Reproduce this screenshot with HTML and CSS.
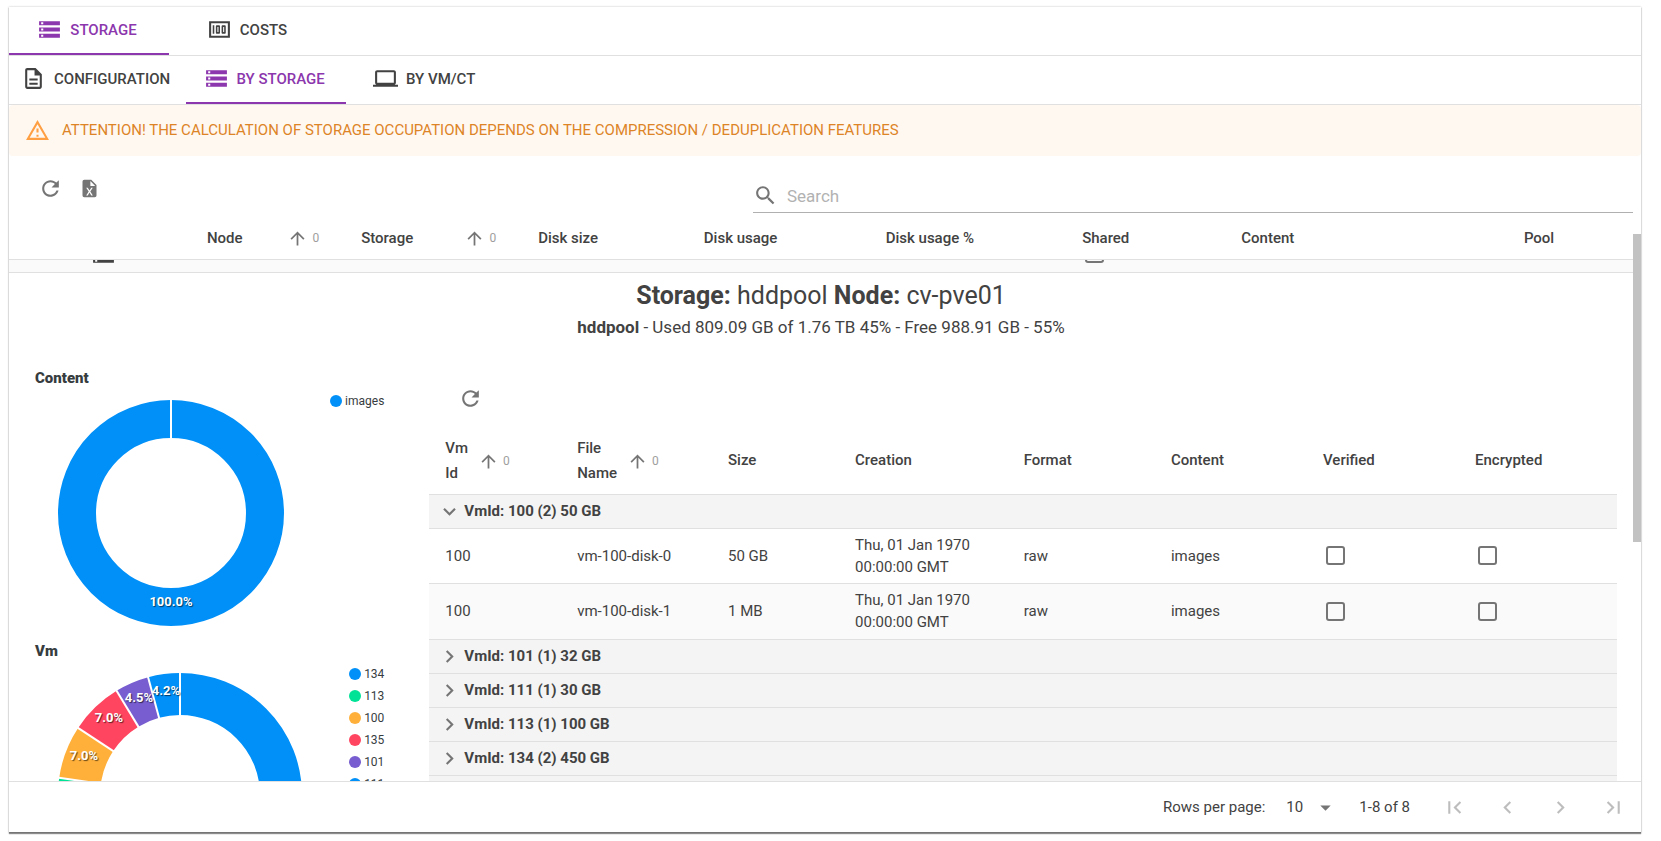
FILE: index.html
```html
<!DOCTYPE html>
<html lang="en">
<head>
<meta charset="utf-8">
<title>Storage</title>
<link rel="stylesheet" href="styles.css">
</head>
<body>
<svg class="defs" aria-hidden="true">
  <symbol id="i-storage" viewBox="0 0 24 24"><path d="M2 20h20v-4H2v4zm2-3h2v2H4v-2zM2 4v4h20V4H2zm4 3H4V5h2v2zm-4 7h20v-4H2v4zm2-3h2v2H4v-2z"/></symbol>
  <symbol id="i-money" viewBox="0 0 24 24"><path d="M15 16h2c.55 0 1-.45 1-1V9c0-.55-.45-1-1-1h-2c-.55 0-1 .45-1 1v6c0 .55.45 1 1 1zm.5-6.500h1v5h-1v-5zM9.500 16h2c.55 0 1-.45 1-1V9c0-.55-.45-1-1-1h-2c-.55 0-1 .45-1 1v6c0 .55.45 1 1 1zm.5-6.500h1v5h-1v-5zM5.500 8H7v8H5.500zM2 4v16h20V4H2zm18 14H4V6h16v12z"/></symbol>
  <symbol id="i-doc" viewBox="0 0 24 24"><path d="M8 16h8v2H8zm0-4h8v2H8zm6-10H6c-1.100 0-2 .9-2 2v16c0 1.100.89 2 1.990 2H18c1.100 0 2-.9 2-2V8l-6-6zm4 18H6V4h7v5h5v11z"/></symbol>
  <symbol id="i-laptop" viewBox="0 0 24 24"><path d="M20 18c1.100 0 1.990-.9 1.990-2L22 6c0-1.100-.9-2-2-2H4c-1.100 0-2 .9-2 2v10c0 1.100.9 2 2 2H0v2h24v-2h-4zM4 6h16v10H4V6z"/></symbol>
  <symbol id="i-warn" viewBox="0 0 24 24"><path d="M12 5.990L19.530 19H4.470L12 5.990M12 2L1 21h22L12 2zm1 14h-2v2h2v-2zm0-6h-2v4h2v-4z"/></symbol>
  <symbol id="i-refresh" viewBox="0 0 24 24"><path d="M17.650 6.350C16.200 4.900 14.210 4 12 4c-4.420 0-7.990 3.580-7.990 8s3.570 8 7.990 8c3.730 0 6.840-2.550 7.730-6h-2.080c-.82 2.330-3.040 4-5.650 4-3.310 0-6-2.690-6-6s2.690-6 6-6c1.660 0 3.140.69 4.220 1.780L13 11h7V4l-2.350 2.350z"/></symbol>
  <symbol id="i-excel" viewBox="0 0 24 24"><path d="M14 2H6a2 2 0 0 0-2 2v16a2 2 0 0 0 2 2h12a2 2 0 0 0 2-2V8l-6-6m1.800 18H14l-2-3.400-2 3.400H8.200l2.900-4.500L8.200 11H10l2 3.400 2-3.400h1.800l-2.900 4.500 2.900 4.500M13 9V3.500L18.500 9H13z"/></symbol>
  <symbol id="i-search" viewBox="0 0 24 24"><path d="M15.500 14h-.79l-.28-.27C15.410 12.590 16 11.110 16 9.500 16 5.910 13.090 3 9.500 3S3 5.910 3 9.500 5.910 16 9.500 16c1.610 0 3.090-.59 4.230-1.570l.27.28v.79l5 4.990L20.490 19l-4.990-5zm-6 0C7.010 14 5 11.990 5 9.500S7.010 5 9.500 5 14 7.010 14 9.500 11.990 14 9.500 14z"/></symbol>
  <symbol id="i-up" viewBox="0 0 24 24"><path d="M4 12l1.410 1.410L11 7.830V20h2V7.830l5.580 5.590L20 12l-8-8-8 8z"/></symbol>
  <symbol id="i-down" viewBox="0 0 24 24"><path d="M7.410 8.590L12 13.170l4.590-4.580L18 10l-6 6-6-6 1.410-1.410z"/></symbol>
  <symbol id="i-right" viewBox="0 0 24 24"><path d="M10 6L8.590 7.410 13.170 12l-4.580 4.590L10 18l6-6z"/></symbol>
  <symbol id="i-left" viewBox="0 0 24 24"><path d="M15.410 7.410L14 6l-6 6 6 6 1.410-1.410L10.830 12z"/></symbol>
  <symbol id="i-first" viewBox="0 0 24 24"><path d="M18.410 16.590L13.820 12l4.590-4.590L17 6l-6 6 6 6zM6 6h2v12H6z"/></symbol>
  <symbol id="i-last" viewBox="0 0 24 24"><path d="M5.590 7.410L10.180 12l-4.590 4.590L7 18l6-6-6-6zM16 6h2v12h-2z"/></symbol>
  <symbol id="i-drop" viewBox="0 0 24 24"><path d="M7 10l5 5 5-5z"/></symbol>
</svg>

<main class="paper">
  <nav class="tabs" role="tablist">
    <button class="tab active" role="tab" aria-selected="true"><svg class="icon"><use href="#i-storage"/></svg>STORAGE</button>
    <button class="tab" role="tab" aria-selected="false"><svg class="icon"><use href="#i-money"/></svg>COSTS</button>
  </nav>
  <nav class="tabs" role="tablist">
    <button class="tab" role="tab" aria-selected="false"><svg class="icon"><use href="#i-doc"/></svg>CONFIGURATION</button>
    <button class="tab active" role="tab" aria-selected="true"><svg class="icon"><use href="#i-storage"/></svg>BY STORAGE</button>
    <button class="tab" role="tab" aria-selected="false"><svg class="icon"><use href="#i-laptop"/></svg>BY VM/CT</button>
  </nav>

  <div class="alert" role="alert"><svg class="icon"><use href="#i-warn"/></svg>ATTENTION! THE CALCULATION OF STORAGE OCCUPATION DEPENDS ON THE COMPRESSION / DEDUPLICATION FEATURES</div>

  <div class="toolbar">
    <div class="tools">
      <button class="icon-button" aria-label="Refresh"><svg class="icon"><use href="#i-refresh"/></svg></button>
      <button class="icon-button" aria-label="Export to Excel"><svg class="icon small"><use href="#i-excel"/></svg></button>
    </div>
    <label class="search"><svg class="icon"><use href="#i-search"/></svg><input type="text" placeholder="Search" aria-label="Search"></label>
  </div>

  <section class="scroller">
    <table class="grid storages">
      <colgroup><col class="s-icon"><col class="s-node"><col class="s-storage"><col class="s-size"><col class="s-usage"><col class="s-percent"><col class="s-shared"><col class="s-content"><col class="s-pool"></colgroup>
      <thead>
        <tr>
          <th></th>
          <th><span class="sortable">Node <button class="sort" aria-label="Sort by node"><svg class="icon arrow"><use href="#i-up"/></svg>0</button></span></th>
          <th><span class="sortable">Storage <button class="sort" aria-label="Sort by storage"><svg class="icon arrow"><use href="#i-up"/></svg>0</button></span></th>
          <th>Disk size</th>
          <th>Disk usage</th>
          <th>Disk usage %</th>
          <th>Shared</th>
          <th>Content</th>
          <th>Pool</th>
        </tr>
      </thead>
      <tbody>
        <tr class="passed">
          <td><div class="sliver device"><svg class="icon"><use href="#i-storage"/></svg></div></td>
          <td></td><td></td><td></td><td></td><td></td>
          <td><div class="sliver"><input type="checkbox" aria-label="Shared"></div></td>
          <td></td><td></td>
        </tr>
        <tr>
          <td class="detail" colspan="9">
            <h1><b>Storage:</b> hddpool <b>Node:</b> cv-pve01</h1>
            <p class="summary"><b>hddpool</b> - Used 809.09 GB of 1.76 TB 45% - Free 988.91 GB - 55%</p>
            <div class="columns">
              <div class="charts">
                <figure class="chart">
                  <figcaption>Content</figcaption>
                  <div class="plot">
                    <svg class="donut content" viewBox="-114 -114 228 228">
                      <circle r="94" stroke="#0090f8" stroke-width="38"/>
                      <line y1="-114" y2="-74"/>
                      <text y="93">100.0%</text>
                    </svg>
                    <ul class="legend">
                      <li><i class="dot blue"></i>images</li>
                    </ul>
                  </div>
                </figure>
                <figure class="chart">
                  <figcaption>Vm</figcaption>
                  <div class="plot">
                    <svg class="donut vm" viewBox="-123 -123 246 246">
                      <g stroke-width="42" transform="rotate(-90)">
                        <circle r="101" pathLength="712" stroke="#0090f8" stroke-dasharray="450 262"/>
                        <circle r="101" pathLength="712" stroke="#00e396" stroke-dasharray="100 612" stroke-dashoffset="-450"/>
                        <circle r="101" pathLength="712" stroke="#feb03b" stroke-dasharray="50 662" stroke-dashoffset="-550"/>
                        <circle r="101" pathLength="712" stroke="#ff4560" stroke-dasharray="50 662" stroke-dashoffset="-600"/>
                        <circle r="101" pathLength="712" stroke="#775dd0" stroke-dasharray="32 680" stroke-dashoffset="-650"/>
                        <circle r="101" pathLength="712" stroke="#0090f8" stroke-dasharray="30 682" stroke-dashoffset="-682"/>
                      </g>
                      <line y1="-124" y2="-78"/>
                      <line y1="-124" y2="-78" transform="rotate(-15.170)"/>
                      <line y1="-124" y2="-78" transform="rotate(-31.350)"/>
                      <line y1="-124" y2="-78" transform="rotate(-56.630)"/>
                      <line y1="-124" y2="-78" transform="rotate(-81.910)"/>
                      <line y1="-124" y2="-78" transform="rotate(-132.470)"/>
                      <text x="-14" y="-100">4.2%</text>
                      <text x="-41" y="-93">4.5%</text>
                      <text x="-71" y="-73">7.0%</text>
                      <text x="-96" y="-35">7.0%</text>
                    </svg>
                    <ul class="legend">
                      <li><i class="dot blue"></i>134</li>
                      <li><i class="dot green"></i>113</li>
                      <li><i class="dot orange"></i>100</li>
                      <li><i class="dot red"></i>135</li>
                      <li><i class="dot violet"></i>101</li>
                      <li><i class="dot blue"></i>111</li>
                    </ul>
                  </div>
                </figure>
              </div>

              <div class="disks">
                <button class="icon-button" aria-label="Refresh disks"><svg class="icon"><use href="#i-refresh"/></svg></button>
                <table class="grid files">
                  <colgroup><col class="f-vm"><col class="f-name"><col class="f-size"><col class="f-creation"><col class="f-format"><col class="f-content"><col class="f-verified"><col class="f-encrypted"></colgroup>
                  <thead>
                    <tr>
                      <th><span class="sortable tight"><span>Vm<br>Id</span><button class="sort" aria-label="Sort by VM id"><svg class="icon arrow"><use href="#i-up"/></svg>0</button></span></th>
                      <th><span class="sortable tight"><span>File<br>Name</span><button class="sort" aria-label="Sort by file name"><svg class="icon arrow"><use href="#i-up"/></svg>0</button></span></th>
                      <th>Size</th>
                      <th>Creation</th>
                      <th>Format</th>
                      <th>Content</th>
                      <th>Verified</th>
                      <th>Encrypted</th>
                    </tr>
                  </thead>
                  <tbody>
                    <tr class="group"><td colspan="8"><button aria-expanded="true"><svg class="icon chevron"><use href="#i-down"/></svg>VmId: 100 (2) 50 GB</button></td></tr>
                    <tr class="file">
                      <td>100</td><td>vm-100-disk-0</td><td>50 GB</td><td>Thu, 01 Jan 1970 00:00:00 GMT</td><td>raw</td><td>images</td>
                      <td><input type="checkbox" aria-label="Verified"></td><td><input type="checkbox" aria-label="Encrypted"></td>
                    </tr>
                    <tr class="file striped">
                      <td>100</td><td>vm-100-disk-1</td><td>1 MB</td><td>Thu, 01 Jan 1970 00:00:00 GMT</td><td>raw</td><td>images</td>
                      <td><input type="checkbox" aria-label="Verified"></td><td><input type="checkbox" aria-label="Encrypted"></td>
                    </tr>
                    <tr class="group"><td colspan="8"><button aria-expanded="false"><svg class="icon chevron"><use href="#i-right"/></svg>VmId: 101 (1) 32 GB</button></td></tr>
                    <tr class="group"><td colspan="8"><button aria-expanded="false"><svg class="icon chevron"><use href="#i-right"/></svg>VmId: 111 (1) 30 GB</button></td></tr>
                    <tr class="group"><td colspan="8"><button aria-expanded="false"><svg class="icon chevron"><use href="#i-right"/></svg>VmId: 113 (1) 100 GB</button></td></tr>
                    <tr class="group"><td colspan="8"><button aria-expanded="false"><svg class="icon chevron"><use href="#i-right"/></svg>VmId: 134 (2) 450 GB</button></td></tr>
                    <tr class="group last"><td colspan="8"></td></tr>
                  </tbody>
                </table>
              </div>
            </div>
          </td>
        </tr>
      </tbody>
    </table>
    <div class="thumb"></div>
  </section>

  <footer class="pager">
    <label for="rows">Rows per page:</label>
    <span class="select"><select id="rows"><option>10</option><option>25</option><option>50</option></select><svg class="icon"><use href="#i-drop"/></svg></span>
    <span class="range">1-8 of 8</span>
    <div class="pages">
      <button class="page" aria-label="First page" disabled><svg class="icon"><use href="#i-first"/></svg></button>
      <button class="page" aria-label="Previous page" disabled><svg class="icon"><use href="#i-left"/></svg></button>
      <button class="page" aria-label="Next page" disabled><svg class="icon"><use href="#i-right"/></svg></button>
      <button class="page" aria-label="Last page" disabled><svg class="icon"><use href="#i-last"/></svg></button>
    </div>
  </footer>
</main>
</body>
</html>
```
FILE: styles.css
```css
:root {
  --primary: #8c37ad;
  --text: #424242;
  --muted: #757575;
  --line: #e0e0e0;
}

* { box-sizing: border-box; }

html, body { height: 100%; }

body {
  margin: 0;
  padding: 7px 20px 8px 9px;
  background: #fff;
  color: var(--text);
  font: 15px/22px Roboto, sans-serif;
  overflow: hidden;
}

button, input, select {
  margin: 0;
  padding: 0;
  border: 0;
  background: none;
  color: inherit;
  font: inherit;
}

.defs { position: absolute; width: 0; height: 0; }

.icon { width: 25px; height: 25px; flex: none; fill: currentColor; display: block; }
.icon.small { width: 21px; height: 21px; }
.icon.arrow { width: 21px; height: 21px; color: var(--muted); }
.icon.chevron { color: var(--muted); }

.paper {
  height: 100%;
  display: flex;
  flex-direction: column;
  background: #fff;
  box-shadow: 0 0 2px rgba(0, 0, 0, .25), 0 1px 1px rgba(0, 0, 0, .4);
}

.tabs { display: flex; flex: none; height: 49px; border-bottom: 1px solid var(--line); }
.tab {
  min-width: 160px;
  padding: 0 16px 1px 12px;
  display: flex;
  align-items: center;
  justify-content: center;
  gap: 8px;
  border-bottom: 2px solid transparent;
  font-weight: 500;
}
.tab.active { color: var(--primary); border-color: var(--primary); }

.alert {
  flex: none;
  height: 51px;
  padding: 0 16px 1px;
  display: flex;
  align-items: center;
  gap: 12px;
  background: #fff8f1;
  color: #dd8427;
  border-radius: 4px;
}
.alert .icon { color: #ff9f43; }

.toolbar {
  flex: none;
  height: 57px;
  padding: 0 8px 0 24px;
  display: flex;
  align-items: flex-end;
  justify-content: space-between;
}
.tools { display: flex; align-self: center; gap: 4px; padding-top: 7px; }
.icon-button { width: 35px; height: 35px; display: grid; place-items: center; color: var(--muted); }
.search {
  width: 55%;
  height: 36px;
  padding-top: 2px;
  display: flex;
  align-items: center;
  gap: 9px;
  border-bottom: 1px solid #b0b0b0;
}
.search .icon { color: var(--muted); }
.search input { flex: 1; outline: 0; font-size: 17px; }
.search input::placeholder { color: #b2b2b2; opacity: 1; }

.scroller { flex: 1; min-height: 0; overflow: hidden; position: relative; padding-right: 8px; }
.thumb { position: absolute; right: 0; top: 3.7%; width: 8px; height: 54.3%; background: #c2c2c2; }

.grid { width: 100%; table-layout: fixed; border-collapse: separate; border-spacing: 0; }
.grid th, .grid td { padding: 0 16px; text-align: left; border-bottom: 1px solid var(--line); }
.grid th { font-weight: 500; }

.grid.storages > thead th { height: 47px; padding-top: 4px; }
.s-icon { width: 11.2%; }
.s-node { width: 9.5%; }
.s-storage { width: 10.9%; }
.s-size { width: 10.2%; }
.s-usage { width: 11.2%; }
.s-percent { width: 12.1%; }
.s-shared { width: 9.8%; }
.s-content { width: 17.4%; }
.s-pool { width: 7.7%; }

.sortable { display: flex; align-items: center; justify-content: space-between; padding-right: 10px; }
.sortable.tight { justify-content: flex-start; gap: 10px; padding-top: 2px; }
.sort { display: flex; align-items: center; gap: 4px; color: #9e9e9e; font-size: 12px; font-weight: 400; }

.passed td { background: #fafafa; }
.sliver { height: 12px; display: flex; align-items: flex-end; overflow: hidden; padding-bottom: 9px; }
.sliver.device { padding: 0 0 5px 66px; }

input[type="checkbox"] {
  appearance: none;
  display: block;
  width: 19px;
  height: 19px;
  margin: 0 3px;
  flex: none;
  border: 2px solid var(--muted);
  border-radius: 3px;
}

.grid .detail { padding: 8px 16px 0; }
.detail h1 { margin: 0; text-align: center; font-size: 25px; line-height: 30px; font-weight: 400; }
.summary { margin: 4px 0 0; text-align: center; font-size: 17px; line-height: 24px; }
.detail b { font-weight: 700; }

.columns { display: flex; padding-top: 28px; }
.charts { width: 25.4%; flex: none; }
.chart { margin: 0 0 11px; height: 262px; }
.chart figcaption { padding-left: 10px; font-weight: 900; color: #373d3f; }
.plot { display: flex; justify-content: space-between; padding: 10px 45px 0 32px; }
.donut { fill: none; flex: none; overflow: visible; }
.donut.content { width: 228px; height: 228px; }
.donut.vm { width: 246px; height: 246px; }
.donut line { stroke: #fff; stroke-width: 2; }
.donut text {
  fill: #fff;
  font-size: 13px;
  font-weight: 700;
  text-anchor: middle;
  text-shadow: 1px 1px 1px rgba(0, 0, 0, .6);
}
.legend { list-style: none; margin: -9px 0 0; padding: 0; color: #373d3f; font-size: 12px; }
.legend li { height: 22px; display: flex; align-items: center; gap: 3px; }
.dot { width: 12px; height: 12px; border-radius: 50%; }
.blue { background: #0090f8; }
.green { background: #00e396; }
.orange { background: #feb03b; }
.red { background: #ff4560; }
.violet { background: #775dd0; }

.disks { flex: 1; padding-top: 14px; }
.disks .icon-button { margin-left: 24px; }
.files { margin-top: 10px; }
.files th { height: 69px; line-height: 25px; }
.f-vm { width: 11.1%; }
.f-name { width: 12.7%; }
.f-size { width: 10.7%; }
.f-creation { width: 14.2%; }
.f-format { width: 12.4%; }
.f-content { width: 12.8%; }
.f-verified { width: 12.8%; }
.f-encrypted { width: 13.3%; }
.file td { height: 55px; }
.file.striped td { height: 56px; background: #fafafa; }
.grid .file td { padding-bottom: 1px; }
.grid .group td { height: 34px; padding: 0 8px 1px; background: #f4f4f4; }
.group button { display: flex; align-items: center; gap: 2px; font-weight: 700; }

.pager {
  flex: none;
  height: 52px;
  padding: 0 9px;
  display: flex;
  align-items: center;
  justify-content: flex-end;
  border-top: 1px solid var(--line);
  border-bottom: 1px solid var(--muted);
}
.select { display: flex; align-items: center; margin: 0 21px; }
.select select { appearance: none; width: 47px; padding-right: 27px; margin-right: -20px; }
.select .icon { color: var(--muted); pointer-events: none; }
.pages { display: flex; gap: 16px; margin-left: 26px; color: #bdbdbd; }
.page { width: 37px; height: 37px; display: grid; place-items: center; }
```
